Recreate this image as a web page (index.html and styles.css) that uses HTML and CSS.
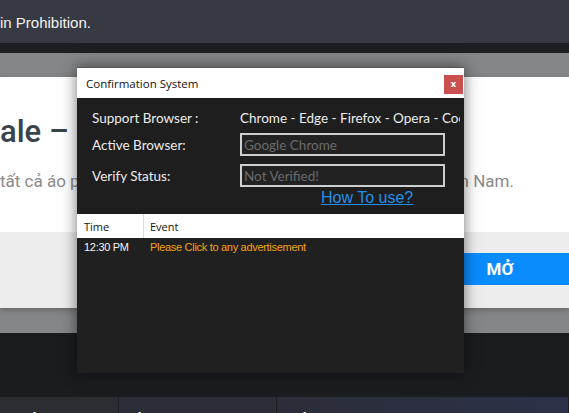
FILE: index.html
```html
<!DOCTYPE html>
<html lang="vi">
<head>
  <meta charset="UTF-8">
  <meta name="viewport" content="width=device-width, initial-scale=1.0">
  <title>Confirmation System</title>
  <link rel="stylesheet" href="styles.css">
</head>
<body>

  <!-- Site header -->
  <div class="topbar">
    <span>in Prohibition.</span>
  </div>
  <div class="strip"></div>

  <!-- Dimmed page with sale card -->
  <div class="overlay">
    <div class="card">
      <div class="card-top">
        <h1>ale –</h1>
        <div class="card-sub">
          <span>tất cả áo phông</span>
          <span>khắp miền Nam.</span>
        </div>
      </div>
      <div class="card-bottom">
        <button class="open-button">MỞ</button>
      </div>
    </div>
  </div>

  <div class="dark-area"></div>

  <div class="bottombar">
    <div class="cell cell-one">Áo Nữ Thời</div>
    <div class="cell cell-two">Áo Thun In Hình Đẹp</div>
    <div class="cell cell-three">Áo Phông Nam Hàn Quốc</div>
  </div>

  <!-- Confirmation window -->
  <div class="dialog">
    <div class="dialog-title">
      <span>Confirmation System</span>
      <button class="close-button">x</button>
    </div>

    <div class="dialog-body">
      <div class="form-row">
        <label>Support Browser :</label>
        <span class="browsers">Chrome - Edge - Firefox - Opera - Coc Coc</span>
      </div>
      <div class="form-row">
        <label>Active Browser:</label>
        <input type="text" placeholder="Google Chrome">
      </div>
      <div class="form-row">
        <label>Verify Status:</label>
        <input type="text" placeholder="Not Verified!">
      </div>
      <div class="help-row">
        <a href="#" class="help-link">How To use?</a>
      </div>
    </div>

    <div class="log-head">
      <div class="col-time">Time</div>
      <div class="col-event">Event</div>
    </div>
    <div class="log-body">
      <div class="log-row">
        <div class="col-time">12:30 PM</div>
        <div class="col-event event-warn">Please Click to any advertisement</div>
      </div>
    </div>
  </div>

</body>
</html>
```

FILE: styles.css
```css
/* General Styles */
* {
  box-sizing: border-box;
  margin: 0;
  padding: 0;
}

body {
  font-family: "Liberation Sans", Arial, sans-serif;
  background-color: #1b1c20;
  width: 569px;
  height: 413px;
  overflow: hidden;
  position: relative;
}

/* Header */
.topbar {
  height: 43px;
  background-color: #373a42;
  color: #f2f2f2;
  font-size: 15px;
  display: flex;
  align-items: center;
  padding-top: 1px;
}

.strip {
  height: 10px;
  background-color: #1e1f22;
}

/* Dimmed area */
.overlay {
  height: 280px;
  background-color: #858687;
  padding-top: 24px;
}

.card {
  height: 231px;
  box-shadow: 0 2px 6px rgba(0, 0, 0, 0.25);
}

.card-top {
  height: 155px;
  background-color: #fff;
  padding-top: 37px;
  overflow: hidden;
}

.card-top h1 {
  font-family: Roboto, sans-serif;
  font-weight: 500;
  font-size: 31px;
  line-height: 36px;
  color: #37444e;
}

.card-sub {
  display: flex;
  justify-content: space-between;
  margin-top: 21px;
  padding-right: 55px;
  font-family: Roboto, sans-serif;
  font-size: 17px;
  color: #8a8a8a;
}

.card-bottom {
  height: 76px;
  background-color: #ededed;
  padding-top: 21px;
  display: flex;
  justify-content: flex-end;
}

.open-button {
  width: 138px;
  height: 32px;
  border: none;
  background-color: #0a8cff;
  color: #fff;
  font-family: Roboto, sans-serif;
  font-weight: 700;
  font-size: 17px;
}

.dark-area {
  height: 64px;
  background-color: #1b1c20;
}

/* Footer links */
.bottombar {
  height: 16px;
  display: flex;
  overflow: hidden;
}

.cell {
  padding-top: 14px;
  color: #fff;
  font-weight: 700;
  font-size: 15px;
  white-space: nowrap;
  overflow: hidden;
  border-right: 1px solid #1d1e23;
}

.cell-one {
  width: 119px;
  background-color: #2c2d32;
  padding-left: 28px;
}

.cell-two {
  width: 158px;
  background-color: #2b2d37;
  padding-left: 14px;
}

.cell-three {
  flex: 1;
  background: linear-gradient(to right, #2b2d38, #2c3149);
  padding-left: 21px;
}

/* Confirmation window */
.dialog {
  position: absolute;
  left: 77px;
  top: 67px;
  width: 387px;
  height: 306px;
  background-color: #202020;
  border-top: 1px solid #555;
  box-shadow: 0 0 14px rgba(0, 0, 0, 0.55);
}

.dialog-title {
  height: 30px;
  background-color: #fff;
  display: flex;
  align-items: center;
  justify-content: space-between;
  padding-left: 9px;
  padding-right: 1px;
  font-family: "Open Sans", sans-serif;
  font-size: 11.5px;
  color: #111;
}

.close-button {
  width: 19px;
  height: 19px;
  margin-top: 2px;
  border: none;
  background-color: #c9504f;
  color: #fff;
  font-family: "DejaVu Sans", sans-serif;
  font-weight: 700;
  font-size: 9px;
  line-height: 19px;
}

.dialog-body {
  height: 116px;
  background-color: #1e1e1e;
  padding-top: 10px;
  padding-left: 15px;
  font-family: Lato, sans-serif;
  font-size: 13.5px;
  color: #ececec;
}

.form-row {
  display: flex;
  align-items: center;
  height: 20px;
  margin-bottom: 5px;
}

.form-row + .form-row {
  height: 23px;
  margin-bottom: 8px;
}

.form-row label {
  width: 148px;
  flex-shrink: 0;
}

.browsers {
  width: 220px;
  white-space: nowrap;
  overflow: hidden;
}

.form-row input {
  width: 205px;
  height: 23px;
  background-color: #222;
  border: 2px solid #cfcfcf;
  padding-left: 2px;
  font-family: Lato, sans-serif;
  font-size: 13.5px;
  color: #ddd;
}

.form-row input::placeholder {
  color: #6a6a6a;
}

.help-row {
  padding-left: 229px;
  margin-top: -6px;
}

.help-link {
  font-family: "Liberation Sans", Arial, sans-serif;
  font-size: 16px;
  color: #2090f0;
}

/* Event log */
.log-head {
  height: 24px;
  background-color: #fff;
  display: flex;
  font-family: "Open Sans", sans-serif;
  font-size: 11px;
  color: #111;
}

.log-head .col-time {
  border-right: 1px solid #ddd;
}

.col-time {
  width: 67px;
  padding-left: 7px;
  display: flex;
  align-items: center;
}

.col-event {
  padding-left: 6px;
  display: flex;
  align-items: center;
}

.log-row {
  display: flex;
  height: 18px;
  font-size: 11px;
  letter-spacing: -0.3px;
  color: #f4f4f4;
}

.event-warn {
  color: #f0a30a;
}
```
